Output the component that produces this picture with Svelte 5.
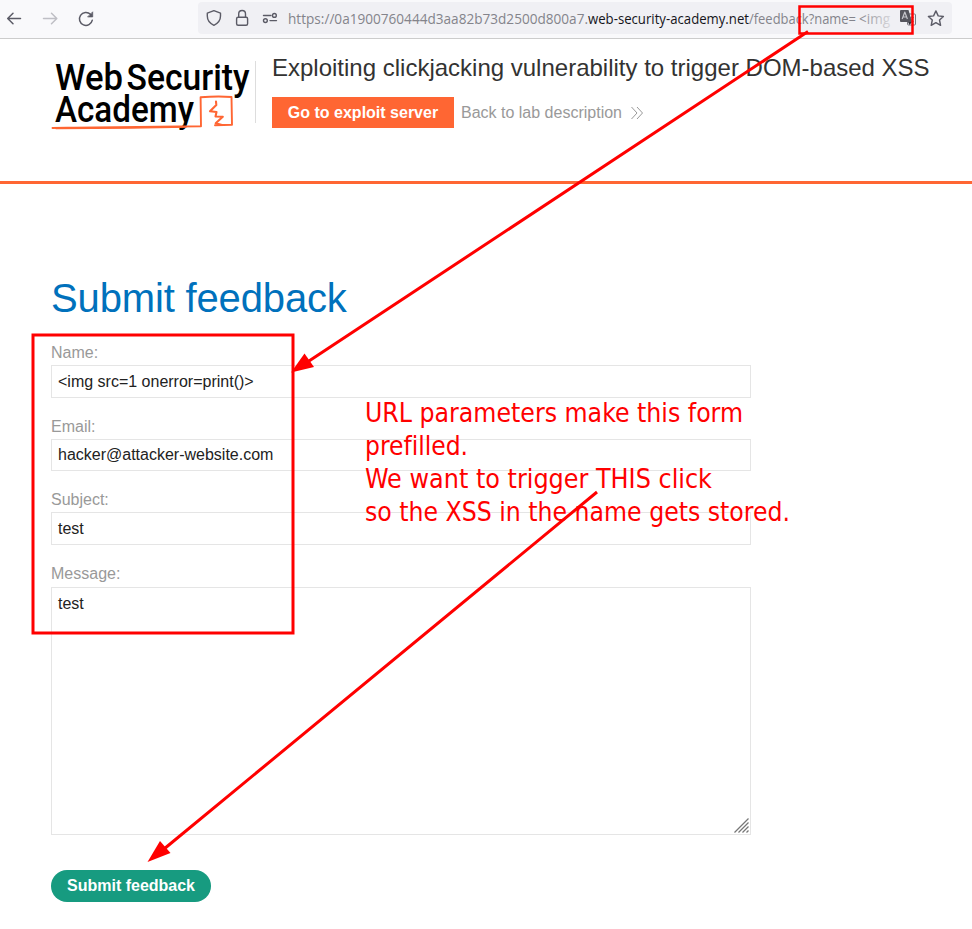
<script>
  const fields = [
    { id: 'name', label: 'Name:', value: '<img src=1 onerror=print()>' },
    { id: 'email', label: 'Email:', value: 'hacker@attacker-website.com' },
    { id: 'subject', label: 'Subject:', value: 'test' },
  ];
</script>

<div class="page">
  <nav class="toolbar">
    <div class="navigation">
      <svg width="100" height="38" viewBox="0 0 100 38" fill="none" stroke="#5b5b66" stroke-width="1.5" stroke-linecap="round" stroke-linejoin="round">
        <path d="M20.500 18.500H8M13 13.300L7.700 18.500L13 23.700" />
        <path stroke="#bfbfc5" d="M43.500 18.500H56M51.500 13.300L56.800 18.500L51.500 23.700" />
        <path d="M90.500 14.300A6.500 6.500 0 1 0 92.300 20.200" />
        <path d="M92.700 12.200V16.900H88Z" fill="#5b5b66" stroke-width=".8" />
      </svg>
    </div>
    <div class="address">
      <svg class="site-icons" width="90" height="32" viewBox="198 2 90 32" fill="none" stroke="#5b5b66" stroke-width="1.4" stroke-linejoin="round" stroke-linecap="round">
        <path d="M213.900 10.600L220.500 13.100V16C220.500 20.200 217.600 23.500 213.900 25.300C210.200 23.500 207.300 20.200 207.300 16V13.100Z" />
        <rect x="236.600" y="17.300" width="11" height="8" rx="1.500" />
        <path d="M238.700 17V13.900A3.400 3.400 0 0 1 245.500 13.900V17" />
        <path d="M263.500 15.500H271M270 20.600H276.500" />
        <circle cx="274.400" cy="15.400" r="1.900" />
        <circle cx="265.400" cy="20.600" r="1.900" />
      </svg>
      <svg class="url" width="606" height="32" viewBox="288 2 606 32">
        <defs>
          <linearGradient id="url-fade" gradientUnits="userSpaceOnUse" x1="858" y1="0" x2="893" y2="0">
            <stop offset="0" stop-color="#84848b" />
            <stop offset="1" stop-color="#dedee3" />
          </linearGradient>
        </defs>
        <text x="288" y="24" textLength="300" lengthAdjust="spacingAndGlyphs" fill="#84848b">https://0a1900760444d3aa82b73d2500d800a7.</text>
        <text x="588" y="24" textLength="161" lengthAdjust="spacingAndGlyphs" fill="#15141a">web-security-academy.net</text>
        <text x="749" y="24" textLength="107" lengthAdjust="spacingAndGlyphs" fill="#84848b">/feedback?name=</text>
        <text x="859" y="24" textLength="31" lengthAdjust="spacingAndGlyphs" fill="url(#url-fade)">&lt;img</text>
      </svg>
      <svg class="page-actions" width="58" height="32" viewBox="894 2 58 32" fill="none" stroke-linejoin="round">
        <rect x="907.500" y="14" width="8" height="11" rx="1" stroke="#77777f" />
        <path d="M909.500 17.500H914M912 16V18C912 20 911 21 910 22M910.500 19L914 22" stroke="#96969d" />
        <path d="M901 10H908.500L912 22H901Q900 22 900 21V11Q900 10 901 10Z" fill="#55555d" />
        <path d="M908 22H912L909.500 25Z" fill="#33333b" />
        <path d="M902.200 19L904.800 12L907.400 19M903 17H906.700" stroke="#c4c4ca" stroke-width="1.200" />
        <path d="M935.900 10.900L938.200 15.900L943.400 16.500L939.500 20L940.600 25.300L935.900 22.600L931.200 25.300L932.300 20L928.400 16.500L933.600 15.900Z" stroke="#5b5b66" stroke-width="1.400" />
      </svg>
    </div>
  </nav>

  <header class="lab-header">
    <div class="logo">
      <svg width="204" height="80" viewBox="52 55 204 80">
        <g class="wordmark">
          <text x="55" y="90" textLength="68" lengthAdjust="spacingAndGlyphs">Web</text>
          <text x="126.500" y="90" textLength="123" lengthAdjust="spacingAndGlyphs">Security</text>
          <text x="55" y="122" textLength="139" lengthAdjust="spacingAndGlyphs">Academy</text>
        </g>
        <g fill="none" stroke="#ff6633" stroke-linejoin="round" stroke-linecap="round">
          <path d="M52.500 128Q62 127.500 74 127.700L201 126.300L200.600 97.300Q217 96 231.500 97L232 124.700L215 125.300" stroke-width="1.900" />
          <path d="M56 128.500L132 128L186 127" stroke-width="1.500" />
          <path d="M216 101.500L216.300 105L210 111.300L216.500 112L215.500 116.500L222.800 116.800L215.700 123.300L222 125" stroke-width="2.100" />
        </g>
        <path d="M255.500 61V123" stroke="#dddddd" />
      </svg>
    </div>
    <div class="lab-title">
      <h2>Exploiting clickjacking vulnerability to trigger DOM-based XSS</h2>
      <div class="links">
        <span class="exploit">Go to exploit server</span>
        <span class="back">Back to lab description</span>
        <svg width="14" height="14" viewBox="0 0 14 14" fill="none" stroke="#999" stroke-width="1"><path d="M1.500 1L7 7L1.500 13M7 1L12.500 7L7 13" /></svg>
      </div>
    </div>
  </header>

  <main>
    <h1>Submit feedback</h1>
    <form>
      {#each fields as field}
        <label for={field.id}>{field.label}</label>
        <div class="input" id={field.id}>{field.value}</div>
      {/each}
      <label class="message-label" for="message">Message:</label>
      <div class="input message" id="message">
        test
        <svg class="grip" width="15" height="15" viewBox="0 0 15 15" stroke="#777" stroke-width="1.300"><path d="M.5 14.500L14.500 .5M4.500 14.500L14.500 4.500M8.500 14.500L14.500 8.500M12.500 14.500L14.500 12.500" /></svg>
      </div>
      <button type="button">Submit feedback</button>
    </form>
  </main>

  <svg class="annotations" width="972" height="929" viewBox="0 0 972 929">
    <g fill="none" stroke="#ff0000" stroke-width="3">
      <rect x="799.500" y="6.500" width="113" height="27" stroke-width="2.500" />
      <rect x="33" y="335" width="260" height="298" />
      <path d="M808 31.500L309 361M597 492L164 849" />
    </g>
    <path d="M291 372.500L304.500 353.500L314 367Z" fill="#ff0000" />
    <path d="M147.500 862L160 841L170.500 853Z" fill="#ff0000" />
    <g class="note">
      <text x="365" y="422" textLength="378" lengthAdjust="spacingAndGlyphs">URL parameters make this form</text>
      <text x="365" y="455" textLength="103" lengthAdjust="spacingAndGlyphs">prefilled.</text>
      <text x="365" y="488" textLength="347" lengthAdjust="spacingAndGlyphs">We want to trigger THIS click</text>
      <text x="365" y="521" textLength="425" lengthAdjust="spacingAndGlyphs">so the XSS in the name gets stored.</text>
    </g>
  </svg>
</div>

<style>
  :global(body) { margin: 0; background: #fff; }
  .page { position: relative; width: 972px; height: 929px; overflow: hidden; font: 16px/20px "Liberation Sans", Arial, sans-serif; color: #222; }
  .page * { box-sizing: border-box; }
  svg { display: block; flex: none; }
  .toolbar { display: flex; height: 39px; background: #f9f9fb; border-bottom: 1px solid #ccc; }
  .navigation { width: 198px; }
  .address { display: flex; width: 754px; height: 32px; margin-top: 2px; border-radius: 4px; background: #f0f0f4; }
  .url { font: 13.8px "Open Sans", "Noto Sans", sans-serif; }
  .lab-header { display: flex; height: 145px; padding: 15px 0 0 52px; border-bottom: 3px solid #ff6633; }
  .logo { width: 220px; padding-top: 1px; }
  .logo svg { overflow: visible; }
  .wordmark { font: 500 37px Roboto, sans-serif; fill: #000; }
  .lab-title h2 { margin: 0; font-weight: 400; font-size: 24px; line-height: 28px; color: #333332; white-space: nowrap; }
  .links { display: flex; align-items: center; margin-top: 15px; }
  .exploit { width: 182px; height: 31px; background: #ff6633; color: #fff; font-weight: 700; line-height: 31px; text-align: center; white-space: nowrap; }
  .back { margin: 0 8px 0 7px; color: #999; white-space: nowrap; }
  main { padding: 90px 0 0 51px; }
  h1 { margin: 0; color: #0071bc; font-size: 40px; line-height: 48px; font-weight: 400; letter-spacing: -.15px; white-space: nowrap; }
  form { display: flex; flex-direction: column; align-items: flex-start; padding-top: 20px; }
  label { height: 23px; line-height: 22px; color: #999; }
  .message-label { height: 24px; }
  .input { width: 700px; height: 33px; margin-bottom: 18px; padding: 0 6px; border: 1px solid #e5e5e5; line-height: 31px; }
  #email { height: 32px; line-height: 29px; }
  .message { position: relative; height: 248px; margin-bottom: 35px; }
  .grip { position: absolute; right: 1px; bottom: 1px; }
  button { width: 160px; height: 32px; padding: 0; border: 0; border-radius: 16px; background: #179b80; color: #fff; font: 700 16px/32px "Liberation Sans", Arial, sans-serif; }
  .annotations { position: absolute; inset: 0; pointer-events: none; }
  .note { font: 26.500px "DejaVu Sans Condensed", "DejaVu Sans", sans-serif; font-variant-ligatures: none; fill: #ff0000; }
</style>
